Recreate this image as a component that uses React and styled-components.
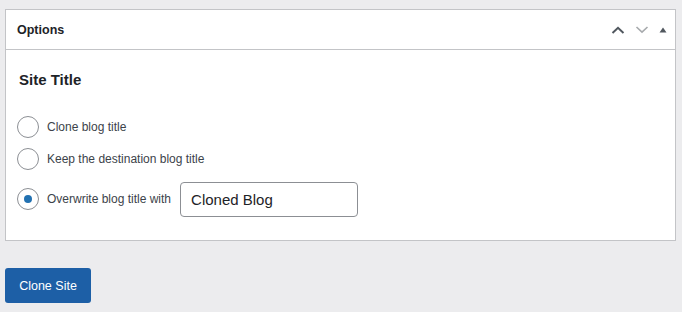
import React, { useState } from 'react';
import styled, { createGlobalStyle } from 'styled-components';

const GlobalStyle = createGlobalStyle`
  html, body {
    margin: 0;
    padding: 0;
    background: #ececee;
    font-family: "Liberation Sans", Arial, sans-serif;
    color: #1d2327;
  }
`;

const Page = styled.div`
  padding: 9px 6px 0 5px;
`;

const Panel = styled.div`
  background: #fff;
  border: 1px solid #c3c4c7;
`;

const PanelHeader = styled.div`
  height: 39px;
  display: flex;
  align-items: center;
  justify-content: space-between;
  padding: 0 8px 0 11px;
  border-bottom: 1px solid #c3c4c7;

  h2 {
    margin: 0;
    font-size: 12.5px;
    font-weight: 700;
  }
`;

const Handles = styled.div`
  display: flex;
  align-items: center;
  gap: 10px;
`;

const HandleBtn = styled.span`
  display: flex;
  align-items: center;
  color: ${(props) => (props.muted ? '#a7aaad' : '#50575e')};
`;

const PanelBody = styled.div`
  padding: 21px 11px 20px 11px;

  h3 {
    margin: 0 0 28px 2px;
    font-size: 15px;
    font-weight: 700;
  }
`;

const Choice = styled.label`
  display: flex;
  align-items: center;
  gap: 8px;
  height: 22px;
  margin-bottom: ${(props) => props.gap || 10}px;
  font-size: 12px;
  color: #3c434a;
`;

const Radio = styled.span`
  width: 20px;
  height: 20px;
  border: 1px solid #8c8f94;
  border-radius: 50%;
  display: flex;
  align-items: center;
  justify-content: center;
  flex-shrink: 0;

  &::after {
    content: '';
    width: 8px;
    height: 8px;
    border-radius: 50%;
    background: ${(props) => (props.checked ? '#2271b1' : 'transparent')};
  }
`;

const TitleInput = styled.input`
  box-sizing: border-box;
  width: 178px;
  height: 35px;
  margin-left: 1px;
  padding: 0 10px;
  border: 1px solid #8c8f94;
  border-radius: 4px;
  font-family: "Liberation Sans", Arial, sans-serif;
  font-size: 15px;
  color: #1d2327;
  outline: none;
`;

const CloneButton = styled.button`
  margin-top: 27px;
  width: 86px;
  height: 35px;
  border: none;
  border-radius: 3px;
  background: #1d5fa6;
  color: #fff;
  font-family: "Liberation Sans", Arial, sans-serif;
  font-size: 12.5px;
`;

function App() {
  const [choice, setChoice] = useState('overwrite');
  const [title, setTitle] = useState('Cloned Blog');

  return (
    <Page>
      <GlobalStyle />
      <Panel>
        <PanelHeader>
          <h2>Options</h2>
          <Handles>
            <HandleBtn>
              <svg width="14" height="8" viewBox="0 0 14 8">
                <path d="M1.5 7 L7 1.8 L12.5 7" fill="none" stroke="currentColor" strokeWidth="2" />
              </svg>
            </HandleBtn>
            <HandleBtn muted>
              <svg width="14" height="8" viewBox="0 0 14 8">
                <path d="M1.5 1 L7 6.2 L12.5 1" fill="none" stroke="currentColor" strokeWidth="1.6" />
              </svg>
            </HandleBtn>
            <HandleBtn>
              <svg width="8" height="6" viewBox="0 0 8 6">
                <path d="M0.5 5.5 L4 0.5 L7.5 5.5 Z" fill="currentColor" />
              </svg>
            </HandleBtn>
          </Handles>
        </PanelHeader>
        <PanelBody>
          <h3>Site Title</h3>
          <Choice onClick={() => setChoice('clone')}>
            <Radio checked={choice === 'clone'} />
            Clone blog title
          </Choice>
          <Choice gap={18} onClick={() => setChoice('keep')}>
            <Radio checked={choice === 'keep'} />
            Keep the destination blog title
          </Choice>
          <Choice gap={0} onClick={() => setChoice('overwrite')}>
            <Radio checked={choice === 'overwrite'} />
            Overwrite blog title with
            <TitleInput value={title} onChange={(e) => setTitle(e.target.value)} />
          </Choice>
        </PanelBody>
      </Panel>
      <CloneButton>Clone Site</CloneButton>
    </Page>
  );
}

export default App;
